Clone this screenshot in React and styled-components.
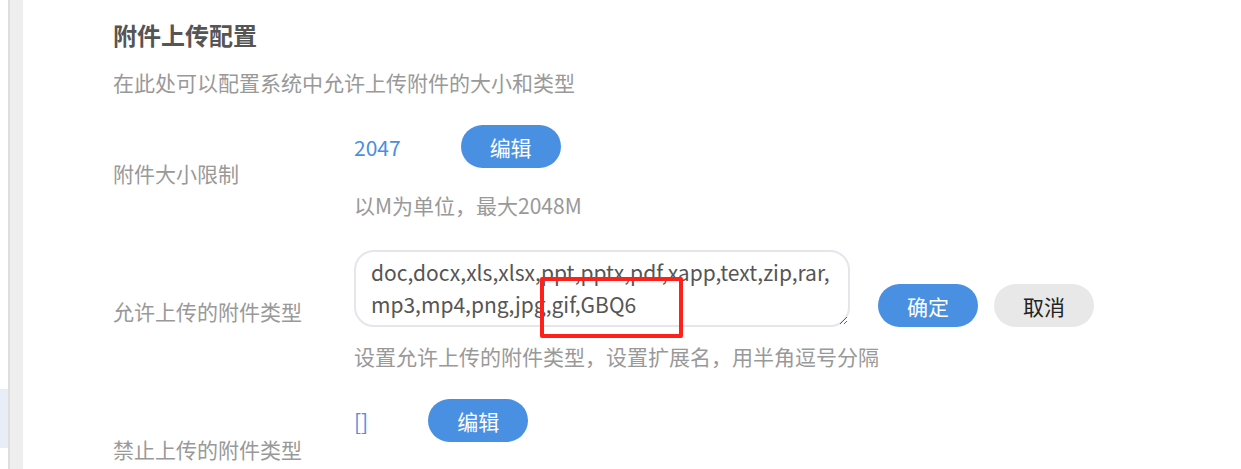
import React, {useState} from 'react'
import styled, {createGlobalStyle} from "styled-components";

const GlobalStyle = createGlobalStyle`
  html, body {
    margin: 0;
    padding: 0;
    height: 469px;
    overflow: hidden;
    background: #fff;
    font-family: "Noto Sans CJK SC", "Noto Sans", sans-serif;
  }
`

const Layout = styled.div`
  display: flex;
  height: 469px;
`

const Sidebar = styled.nav`
  width: 8px;
  padding-top: 35px;
  display: flex;
  flex-direction: column;
`

const MenuItem = styled.div`
  height: 59px;
  flex-shrink: 0;
  background-color: ${p => p.$active ? '#e8eef8' : 'transparent'};
`

const Gutter = styled.div`
  width: 13px;
  background-color: #eeeeee;
  border-left: 2px solid #dedede;
`

const Main = styled.main`
  flex: 1;
  padding: 19px 0 0 90px;
`

const Title = styled.h2`
  margin: 0;
  font-size: 24px;
  line-height: 32px;
  font-weight: 700;
  color: #555;
`

const Subtitle = styled.p`
  margin: 16px 0 28px;
  font-size: 21px;
  line-height: 30px;
  color: #999;
`

const Row = styled.section`
  display: flex;
  align-items: center;
  margin-bottom: ${p => p.$space || 28}px;
`

const Label = styled.div`
  width: 241px;
  flex-shrink: 0;
  font-size: 21px;
  line-height: 30px;
  color: #999;
`

const Field = styled.div`
  display: flex;
  flex-direction: column;
  padding-bottom: ${p => p.$tail || 0}px;
`

const ValueLine = styled.div`
  display: flex;
  align-items: ${p => p.$bottom ? 'flex-end' : 'center'};
  min-height: 42px;
`

const Value = styled.span`
  font-size: 21px;
  color: #4a8ee0;
  margin-right: 60px;
`

const Button = styled.button`
  width: 100px;
  height: 43px;
  border: none;
  border-radius: 22px;
  margin-left: ${p => p.$gap || 0}px;
  font-family: inherit;
  font-size: 21px;
  cursor: pointer;
  color: ${p => p.$secondary ? '#222' : '#fff'};
  background-color: ${p => p.$secondary ? '#e8e8e8' : '#4a90e2'};
`

const Hint = styled.div`
  margin-top: ${p => p.$gap}px;
  font-size: 21px;
  line-height: 30px;
  color: #999;
`

const AreaWrap = styled.div`
  position: relative;
`

const TypesArea = styled.textarea`
  display: block;
  box-sizing: border-box;
  width: 496px;
  height: 77px;
  padding: 4px 15px;
  border: 2px solid #e4e6ec;
  border-radius: 20px;
  outline: none;
  font-family: inherit;
  font-size: 21px;
  line-height: 32px;
  color: #555;
`

const Marker = styled.div`
  position: absolute;
  left: 186px;
  top: 27px;
  width: 143px;
  height: 61px;
  box-sizing: border-box;
  border: 4px solid #ff2019;
  border-radius: 2px;
  pointer-events: none;
`

const App = () => {
  const [types, setTypes] = useState('doc,docx,xls,xlsx,ppt,pptx,pdf,xapp,text,zip,rar,mp3,mp4,png,jpg,gif,GBQ6')

  return (
    <Layout>
      <GlobalStyle/>
      <Sidebar>
        {[0, 1, 2, 3, 4, 5, 6].map(i => <MenuItem key={i} $active={i === 6}/>)}
      </Sidebar>
      <Gutter/>
      <Main>
        <Title>附件上传配置</Title>
        <Subtitle>在此处可以配置系统中允许上传附件的大小和类型</Subtitle>

        <Row $space={30}>
          <Label>附件大小限制</Label>
          <Field>
            <ValueLine>
              <Value>2047</Value>
              <Button>编辑</Button>
            </ValueLine>
            <Hint $gap={22}>以M为单位，最大2048M</Hint>
          </Field>
        </Row>

        <Row>
          <Label>允许上传的附件类型</Label>
          <Field>
            <ValueLine $bottom>
              <AreaWrap>
                <TypesArea value={types} onChange={e => setTypes(e.target.value)}/>
                <Marker/>
              </AreaWrap>
              <Button $gap={28}>确定</Button>
              <Button $gap={16} $secondary>取消</Button>
            </ValueLine>
            <Hint $gap={14}>设置允许上传的附件类型，设置扩展名，用半角逗号分隔</Hint>
          </Field>
        </Row>

        <Row>
          <Label>禁止上传的附件类型</Label>
          <Field $tail={57}>
            <ValueLine>
              <Value>[]</Value>
              <Button>编辑</Button>
            </ValueLine>
          </Field>
        </Row>
      </Main>
    </Layout>
  );
}
export default App
